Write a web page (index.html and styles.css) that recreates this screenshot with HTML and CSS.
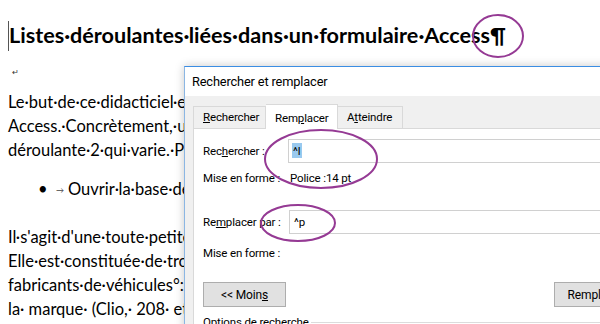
FILE: index.html
```html
<!DOCTYPE html>
<html lang="fr">
<head>
    <meta charset="UTF-8">
    <title>Listes déroulantes liées</title>
    <link rel="stylesheet" href="styles.css">
</head>
<body>
    <div class="page">
        <h1 class="title"><span class="caret"></span>Listes·déroulantes·liées·dans·un·formulaire·Access¶</h1>
        <div class="mark">↵</div>

        <div class="para">
            <div class="line">Le·but·de·ce·didacticiel·est·de·montrer·comment·lier·deux·listes·dans·un·formulaire</div>
            <div class="line">Access.·Concrètement,·un·choix·dans·la·liste·déroulante·1·fait·que·c'est·la·liste</div>
            <div class="line">déroulante·2·qui·varie.·Pour·cela,·nous·allons·utiliser·une·petite·base.¶</div>
        </div>

        <div class="bullet"><span class="dot">•</span><span class="tabmark">→</span>Ouvrir·la·base·de·données·listes-liees.accdb¶</div>

        <div class="para">
            <div class="line">Il·s'agit·d'une·toute·petite·base·de·données.¶</div>
            <div class="line">Elle·est·constituée·de·trois·tables.·La·première·liste·les</div>
            <div class="line">fabricants·de·véhicules°:·Renault,·Peugeot...·La·seconde</div>
            <div class="line wide">la· marque· (Clio,· 208· et· ...)· et· la· troisième</div>
            <div class="line">correspond·à·la·fiche·technique·du·véhicule.¶</div>
        </div>
    </div>

    <div class="dialog">
        <div class="dlg-title">Rechercher et remplacer</div>
        <div class="dlg-body">
            <div class="tabs">
                <div class="tab"><u>R</u>echercher</div>
                <div class="tab active">Rem<u>p</u>lacer</div>
                <div class="tab">A<u>t</u>teindre</div>
            </div>
            <div class="panel">
                <div class="row field">
                    <span class="lbl">Rec<u>h</u>ercher :</span>
                    <div class="input"><span class="sel">^l</span></div>
                </div>
                <div class="row info">
                    <span class="lbl">Mise en forme :</span>
                    <span class="val">Police :14 pt</span>
                </div>
                <div class="row field second">
                    <span class="lbl">Re<u>m</u>placer par :</span>
                    <div class="input">^p</div>
                </div>
                <div class="row info last">
                    <span class="lbl">Mise en forme :</span>
                </div>
                <div class="buttons">
                    <button>&lt;&lt; Moin<u>s</u></button>
                    <button>Rempl<u>a</u>cer</button>
                </div>
                <div class="group">Options de recherche</div>
            </div>
        </div>
    </div>

    <svg class="notes" width="600" height="324" viewBox="0 0 600 324">
        <ellipse cx="498" cy="36" rx="25" ry="21" />
        <ellipse cx="321" cy="159" rx="56" ry="29" />
        <ellipse cx="298" cy="223" rx="37" ry="18" />
    </svg>
</body>
</html>
```

FILE: styles.css
```css
/* Document Word */
body {
    margin: 0;
    background: #fff;
    color: #000;
    font-family: Lato, "Liberation Sans", sans-serif;
    overflow: hidden;
    width: 600px;
    height: 324px;
    position: relative;
}

.page {
    padding: 0 8px;
    white-space: nowrap;
}

.title {
    margin: 0;
    padding-top: 19px;
    height: 36px;
    font-size: 21.6px;
    font-weight: 700;
    line-height: 32px;
}

.caret {
    display: inline-block;
    width: 1px;
    height: 30px;
    background: #555;
    vertical-align: -8px;
}

.mark {
    height: 36px;
    padding: 12px 0 0 4px;
    box-sizing: border-box;
    font-size: 8px;
    line-height: 10px;
    color: #333;
}

.para {
    font-size: 16.5px;
    line-height: 23.8px;
}

.bullet {
    font-size: 16.5px;
    line-height: 24px;
    margin: 15px 0 24px 30px;
}

.dot {
    display: inline-block;
    width: 18px;
}

.tabmark {
    display: inline-block;
    width: 12px;
    font-size: 8px;
    color: #444;
    vertical-align: 2px;
}

/* Boîte de dialogue */
.dialog {
    position: absolute;
    left: 184px;
    top: 66px;
    width: 452px;
    height: 300px;
    background: #f0f0f0;
    border: 1px solid #8bb6e3;
    border-top-color: #3b8de3;
    box-shadow: 0 0 9px rgba(0, 0, 0, 0.22);
    font-family: Roboto, sans-serif;
    font-size: 11.5px;
    letter-spacing: -0.15px;
    color: #000;
    white-space: nowrap;
}

.dlg-title {
    background: #fff;
    height: 29px;
    line-height: 29px;
    padding-left: 7px;
    font-size: 12.8px;
}

.dlg-body {
    padding: 7px 0 0 8px;
}

.tabs {
    display: flex;
    align-items: flex-end;
    height: 25px;
}

.tab {
    height: 22px;
    line-height: 21px;
    padding: 0 9px;
    border: 1px solid #d9d9d9;
    border-bottom: none;
    border-left: none;
    box-sizing: border-box;
}

.tab:first-child {
    border-left: 1px solid #d9d9d9;
    width: 73px;
}

.tab.active {
    background: #fff;
    height: 25px;
    line-height: 26px;
    width: 72px;
    position: relative;
    top: 1px;
}

.tab:last-child {
    width: 65px;
}

.panel {
    background: #fff;
    border-top: 1px solid #d9d9d9;
    border-left: 1px solid #d9d9d9;
    padding: 10px 0 0 9px;
    height: 240px;
}

.row {
    display: flex;
    align-items: center;
    height: 24px;
}

.info {
    padding-top: 3px;
}

.lbl {
    width: 85px;
    flex: none;
}

.input {
    flex: 1;
    height: 24px;
    box-sizing: border-box;
    border: 1px solid #d0d0d0;
    padding: 3px 3px 0;
    line-height: 16px;
}

.sel {
    display: inline-block;
    background: #99c9ef;
    height: 15px;
    line-height: 16px;
    padding: 0 2px 0 1px;
}

.val {
    padding-left: 2px;
}

.second {
    margin-top: 20px;
}

.second .input {
    margin-left: 1px;
    padding-left: 4px;
}

.last {
    margin-top: 4px;
}

.buttons {
    display: flex;
    justify-content: space-between;
    margin-top: 17px;
}

.buttons button {
    width: 83px;
    height: 25px;
    background: #e1e1e1;
    border: 1px solid #adadad;
    font-family: inherit;
    font-size: 12px;
    letter-spacing: -0.15px;
    padding: 0;
    color: #000;
}

.group {
    display: flex;
    align-items: center;
    margin-top: 7px;
    line-height: 16px;
}

.group::after {
    content: "";
    flex: 1;
    border-top: 1px solid #dcdcdc;
    margin-left: 2px;
}

/* Annotations */
.notes {
    position: absolute;
    left: 0;
    top: 0;
}

.notes ellipse {
    fill: none;
    stroke: #953a94;
    stroke-width: 2;
}
```
